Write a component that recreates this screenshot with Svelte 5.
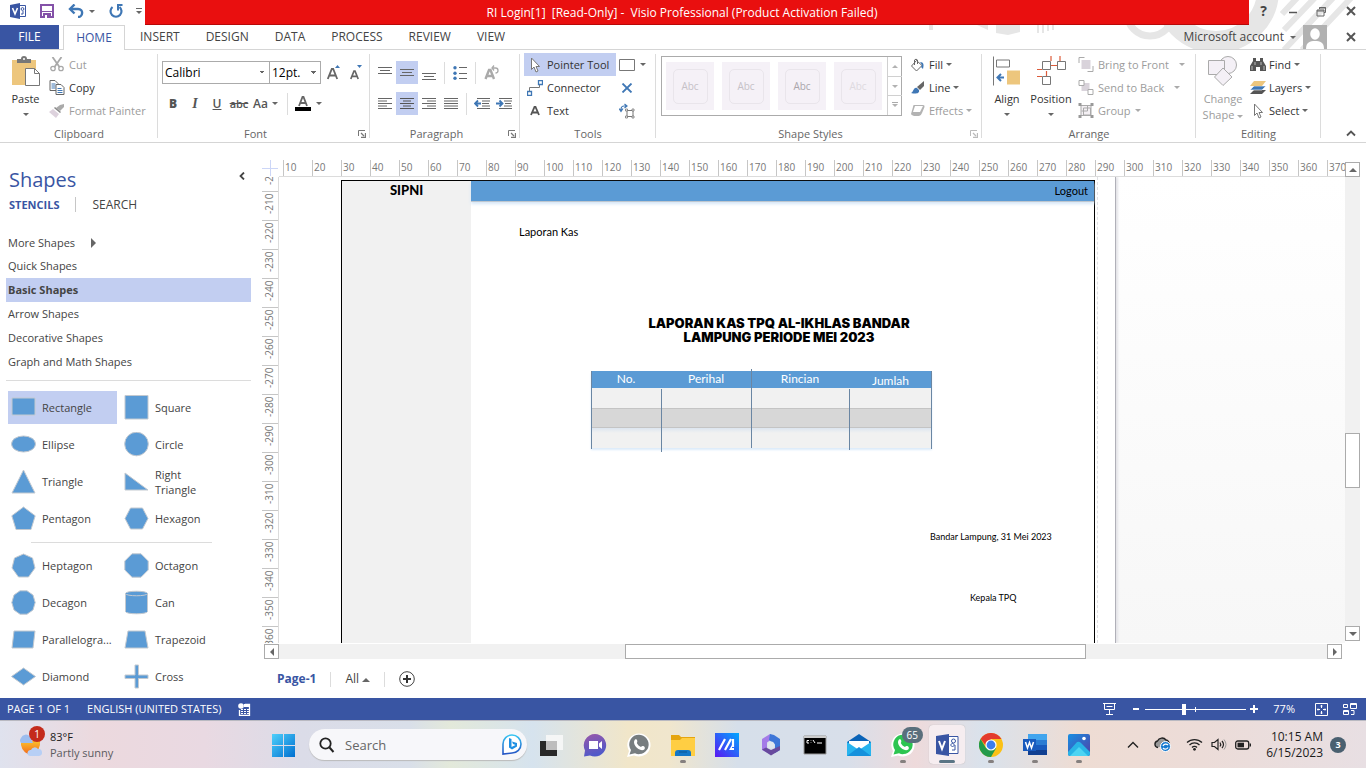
<script>
  // name: [width, height, svg content]
  const icons = {
    visio: [16, 16, '<path d="M0 2 10 0v16L0 14z" fill="#3955a3"/><path d="M2.500 5 5 11 7.500 5" fill="none" stroke="#fff" stroke-width="1.600"/><path d="M10 2.500h5.500v11H10" fill="#fff" stroke="#3955a3"/><circle cx="12.500" cy="6" r="1.400" fill="none" stroke="#3955a3"/><path d="M11 11h2V8" fill="none" stroke="#3955a3"/>'],
    save: [14, 14, '<path d="M1 1h12v12H1z" fill="#fff" stroke="#8452a8" stroke-width="2"/><path d="M1 7h12v1H1zM3 9h8v5H3z" fill="#8452a8"/><path d="M5 11h2v3H5z" fill="#fff"/>'],
    undo: [16, 14, '<path d="M2 5h8c6 0 5 8 0 8" fill="none" stroke="#3f77b5" stroke-width="2.400"/><path d="M6.500.5 2 5l4.500 4.500" fill="none" stroke="#3f77b5" stroke-width="2.400"/>'],
    redo: [15, 15, '<path d="M3.500 3A5.500 5.500 0 1 0 10.500 3" fill="none" stroke="#3f77b5" stroke-width="2.200"/><path d="M8 1h5.500M9 1v5.500" fill="none" stroke="#3f77b5" stroke-width="2"/>'],
    custom: [6, 7, '<path d="M0 .5h6" stroke="#666"/><path d="M0 3h6L3 6z" fill="#666"/>'],
    min: [10, 10, '<path d="M1 6.500h8" stroke="#555" stroke-width="1.500"/>'],
    restore: [11, 11, '<path d="M3.500 3V1.500h6v5H8M1 4h7v6H1zM1 5h7M3 2h7" fill="none" stroke="#666"/>'],
    close: [10, 10, '<path d="M1 1l8 8M9 1 1 9" stroke="#555" stroke-width="2"/>'],
    avatar: [24, 24, '<path d="M0 0h24v24H0z" fill="#b1b1b1"/><ellipse cx="12" cy="9" rx="4.800" ry="5.800" fill="#fff"/><path d="M3 24c0-7 4-8 9-8s9 1 9 8z" fill="#fff"/>'],
    paste: [30, 30, '<path d="M1 4h24v25H1z" fill="#edc67d"/><path d="M6 3h4a3 3 0 0 1 6 0h4v4H6z" fill="#777"/><circle cx="13" cy="3" r="1" fill="#fff"/><path d="M14.500 12.500h9l5 5v12h-14z" fill="#fff" stroke="#777"/><path d="M23.500 12.500v5h5" fill="none" stroke="#777"/>'],
    cut: [14, 15, '<path d="M2.500 0 9.500 10M11.500 0 4.500 10" stroke="#a8a8a8" stroke-width="1.800"/><circle cx="3" cy="11.500" r="2.200" fill="none" stroke="#a8a8a8" stroke-width="1.300"/><circle cx="11" cy="11.500" r="2.200" fill="none" stroke="#a8a8a8" stroke-width="1.300"/>'],
    copy: [15, 15, '<path d="M.5.500h5l3 3v7h-8z" fill="#fff" stroke="#666"/><path d="M2 4h4M2 6h4M2 8h4" stroke="#3f77b5"/><path d="M6.500 4.500h5l3 3v7h-8z" fill="#fff" stroke="#666"/><path d="M8 8.500h4M8 10.500h5M8 12.500h5" stroke="#3f77b5"/>'],
    painter: [16, 14, '<path d="m11 1 4-1v3l-4 4-4-3z" fill="#aaa"/><path d="m6 3 6 5-1 1-6-5z" fill="#888"/><path d="m4 5 6 5-3 4-7-6z" fill="#ddd2dd"/>'],
    growA: [14, 15, '<path d="M.8 14 4.800 4h1.400l4 10M2.300 10.500h6.500" fill="none" stroke="#666" stroke-width="1.800"/><path d="M8 3l2.500-3L13 3z" fill="#3f77b5"/>'],
    shrinkA: [14, 15, '<path d="M1.800 14 5 6h1l3.200 8M3 11.300h5" fill="none" stroke="#666" stroke-width="1.700"/><path d="M8 0h5l-2.500 3z" fill="#3f77b5"/>'],
    fontColor: [16, 15, '<path d="M4 10 7.500 1h1L12 10M5 7h6" fill="none" stroke="#666" stroke-width="1.800"/><path d="M0 11h16v4H0z" fill="#000"/>'],
    alTop: [14, 14, '<path d="M0 1.500h14M2 4.500h10M0 7.500h14" stroke="#666"/>'],
    alMid: [14, 14, '<path d="M0 3.500h14M2 6.500h10M0 9.500h14" stroke="#666"/>'],
    alBot: [14, 14, '<path d="M0 7.500h14M2 10.500h10M0 13.500h14" stroke="#666"/>'],
    bullets: [14, 14, '<circle cx="2" cy="1.800" r="1.700" fill="#3f77b5"/><circle cx="2" cy="7.300" r="1.700" fill="#3f77b5"/><circle cx="2" cy="12.300" r="1.700" fill="#3f77b5"/><path d="M6 1.500h8M6 7.500h8M6 12.500h8" stroke="#666"/>'],
    rotText: [15, 15, '<path d="M1.500 14 5 5h1.500L10 14M3 11h6" fill="none" stroke="#aaa" stroke-width="2.400"/><path d="M8 3h3.500a2.500 2.500 0 0 1 0 5M10 .5 8 3l2 2.500" fill="none" stroke="#aaa" stroke-width="1.300"/>'],
    left: [14, 11, '<path d="M0 .5h14M0 3h9M0 5.500h14M0 8h9M0 10.500h14" stroke="#666"/>'],
    center: [14, 11, '<path d="M0 .5h14M3 3h8M0 5.500h14M3 8h8M0 10.500h14" stroke="#555"/>'],
    right: [14, 11, '<path d="M0 .5h14M5 3h9M0 5.500h14M5 8h9M0 10.500h14" stroke="#666"/>'],
    justify: [14, 11, '<path d="M0 .5h14M0 3h14M0 5.500h14M0 8h14M0 10.500h14" stroke="#666"/>'],
    outdent: [16, 11, '<path d="M3 .5h13M8 3h8M8 5.500h7M8 8h8M3 10.500h13" stroke="#666"/><path d="M7 5.500H1.500M4 2.500l-3 3 3 3" fill="none" stroke="#3f77b5" stroke-width="1.800"/>'],
    indent: [16, 11, '<path d="M3 .5h13M8 3h8M9 5.500h6M8 8h8M3 10.500h13" stroke="#666"/><path d="M0 5.500h6M3.500 2.500l3 3-3 3" fill="none" stroke="#3f77b5" stroke-width="1.800"/>'],
    pointer: [16, 16, '<path d="M4.500 1v11.500l2.500-2.500 2 5 2-1-2-4.500h3.500z" fill="#fff" stroke="#777"/>'],
    connector: [16, 16, '<path d="M2.500 11V7.500h10V5" fill="none" stroke="#777"/><path d="M.5 11.500h4v4h-4zM11.500.500h4v4h-4z" fill="#fff" stroke="#3f77b5" stroke-width="1.300"/>'],
    textA: [16, 16, '<path d="M4 12 7.500 4h1L12 12M5.500 9.500h5" fill="none" stroke="#555" stroke-width="1.800"/>'],
    rect: [16, 12, '<path d="M.5.500h15v11H.5z" fill="#fff" stroke="#777"/>'],
    delx: [12, 10, '<path d="M1.500.500l9 9M10.500.500l-9 9" stroke="#3f77b5" stroke-width="1.800"/>'],
    cpoint: [17, 16, '<path d="M2 7.500V6a3 3 0 0 1 3-3h2M0 5.500l2 3 2-3M5.500 1l2.500 2-2.500 2" fill="none" stroke="#3f77b5" stroke-width="1.200"/><path d="M8 7.500h6v6H8z" fill="none" stroke="#777"/><path d="M6.500 6h2v2h-2zM13 6h2v2h-2zM6.500 13h2v2h-2zM13 13h2v2h-2z" fill="#fff" stroke="#777" stroke-width=".8"/>'],
    fill: [16, 14, '<path d="M6.500 2.500 12 7.500 6.500 13 1.500 8z" fill="#fff" stroke="#666"/><path d="M4.500 7V2a2 2 0 0 1 3 0v4" fill="none" stroke="#666"/><path d="M10 4c4 0 4 3 3 7l-2-2 1-2z" fill="#3f77b5"/>'],
    line: [14, 14, '<path d="m6 6 7-6v5L9 9z" fill="#666"/><path d="M0 12c3-1 2-6 6-5l2 2c1 4-4 4-8 3z" fill="#3f77b5"/>'],
    effects: [16, 13, '<path d="M4 1h9q2 0 1.500 2L12 9q-1 3-3 3H4q-3-1-3-2L3 3q0-2 1-2z" fill="#b3b3b3"/><path d="M5 2h8l-3 6H3z" fill="#fff"/>'],
    align: [28, 29, '<path d="M.5 0v29" stroke="#777"/><path d="M3.500 3.500h13v7h-13z" fill="#fff" stroke="#777"/><path d="M14 14h13v14H14z" fill="#edc67d"/><path d="M11 21H4.500M8 17.500 4.500 21 8 24.500" fill="none" stroke="#3f77b5" stroke-width="2"/>'],
    position: [29, 30, '<path d="M14 0v5M23 0v5M0 13.500h5M0 20.500h5M9.500 15v5M14 9.500h6" stroke="#dc5b3a" stroke-width="1.200"/><path d="M5.500 5.500h8v8h-8zM20.500 5.500h8v8h-8zM5.500 20.500h8v8h-8z" fill="#fff" stroke="#777"/>'],
    front: [15, 15, '<path d="M.5 6V.5H6M14.500 9v5.500H9" fill="none" stroke="#aaa"/><path d="M3 3h9v9H3z" fill="#d9d3db"/>'],
    back: [15, 15, '<path d="M3 3h8v8H3z" fill="#d9d3db"/><path d="M.5.500h5v5h-5zM9.500 9.500h5v5h-5z" fill="#fff" stroke="#aaa"/>'],
    group: [15, 15, '<path d="M2.500 2.500h10v10h-10zM5 5h7v7H5z" fill="#f4f0f4" stroke="#aaa"/><path d="M3 8h6V3" fill="none" stroke="#aaa"/><path d="M0 0h3v3H0zM12 0h3v3h-3zM0 12h3v3H0zM12 12h3v3h-3z" fill="#999"/>'],
    change: [30, 30, '<circle cx="20" cy="9" r="8.500" fill="#f4f0f6" stroke="#aaa"/><path d="M.5 4.500h16v14H.5z" fill="#f4f0f6" stroke="#aaa"/><path d="m15 12 9 9-9 8.500L6.500 21z" fill="#f4f0f6" stroke="#aaa"/>'],
    find: [16, 13, '<path d="M3 0h3v3h4V0h3v3l3 5v5h-6V9H6v4H0V8l3-5z" fill="#555"/><path d="M2 8v4M5 4v3M14 8v4M11 4v3" stroke="#bbb"/>'],
    layers: [16, 13, '<path d="M4 9h12l-4 4H0z" fill="#555"/><path d="M4 5h12l-4 4H0z" fill="#3f77b5" stroke="#fff" stroke-width=".6"/><path d="M4 0h12l-4 5H0z" fill="#edc67d"/>'],
    launcher: [8, 8, '<path d="M.5 6V.5H7" fill="none" stroke="#777"/><path d="m3 3 3 3M7.500 3v4.500H3" fill="none" stroke="#777" stroke-width="1.300"/>'],
    chevUp: [10, 7, '<path d="m1 5.500 4-4 4 4" fill="none" stroke="#555" stroke-width="1.800"/>'],
    chevLeft: [6, 8, '<path d="M5 .5 1.500 4 5 7.500" fill="none" stroke="#444" stroke-width="1.800"/>'],
    macro: [13, 13, '<path d="M1.500 7v5.500h10V1.500H7" fill="none" stroke="#fff" stroke-width="1.300"/><path d="M6 1h6v3H6z" fill="#fff"/><circle cx="3" cy="3" r="2.800" fill="#fff"/><path d="M3 6.500h8M3 8.500h8M3 10.500h8" stroke="#fff" stroke-dasharray="2 1"/>'],
    present: [13, 12, '<path d="M0 .5h13M1.500 1v5.500h10V1M3.500 3.500h6M6.500 7v4M3 11.500h7" fill="none" stroke="#fff"/>'],
    fit: [13, 13, '<path d="M.5.500h12v12H.5z" fill="none" stroke="#fff"/><path d="M6.500 2v3M6.500 8v3M2 6.500h3M8 6.500h3M5.500 3h2M5.500 10h2M3 5.500v2M10 5.500v2" stroke="#fff"/>'],
    switch: [14, 12, '<path d="M.5 1.500h4v3h-4zM7.500.500h6v5h-6zM.5 7.500h5v4h-5zM8 7.500h3v4H8M7 1.500h7M0 8.500h6" fill="none" stroke="#fff"/>'],
    addPage: [16, 16, '<circle cx="8" cy="8" r="7.300" fill="#fff" stroke="#444"/><path d="M8 4v8M4 8h8" stroke="#333" stroke-width="2"/>'],
    weather: [28, 30, '<path d="M3 12h19a9.500 11 0 0 1-19 4z" fill="url(#sun)"/><path d="M3 14a4 4 0 0 1 0-5 5 5 0 0 1 9-1l3 6z" fill="#9dbdee"/><path d="M12 27a3 3 0 0 1 1-6 4 4 0 0 1 7-1 3.500 3.500 0 0 1 1 7z" fill="#b7cff5"/><defs><linearGradient id="sun" x2="0" y2="1"><stop stop-color="#fbc02d"/><stop offset="1" stop-color="#f26a1b"/></linearGradient></defs>'],
    win: [24, 24, '<defs><linearGradient id="w" x2="1" y2="1"><stop stop-color="#4fd0fb"/><stop offset="1" stop-color="#006fd0"/></linearGradient></defs><path d="M1 1h11v11H1zM13 1h11v11H13zM1 13h11v11H1zM13 13h11v11H13z" fill="url(#w)"/>'],
    search: [16, 16, '<circle cx="6.500" cy="6.500" r="5.200" fill="none" stroke="#222" stroke-width="1.800"/><path d="m10.500 10.500 4 4.500" stroke="#222" stroke-width="2"/>'],
    bing: [20, 21, '<defs><linearGradient id="bg" x2="0" y2="1"><stop stop-color="#38c6f2"/><stop offset="1" stop-color="#2454c5"/></linearGradient></defs><path d="M1 20V10a9 9 0 1 1 9 9z" fill="#fff" stroke="url(#bg)" stroke-width="1.600"/><path d="M7 4l2.500 1v8l4-2-2.500-1-1-2.500 5 1.500v3.500l-5 3-3-2z" fill="#1d8fe3"/>'],
    taskview: [24, 24, '<path d="M1 8h17v15H1z" fill="#282828"/><path d="M7 2h17v15H7z" fill="#f7f7f7" opacity=".9"/><path d="M7 8h11v9H7z" fill="#bdbdbd"/>'],
    chat: [24, 24, '<defs><linearGradient id="ch" x2=".3" y2="1"><stop stop-color="#9a58a9"/><stop offset="1" stop-color="#5059c9"/></linearGradient></defs><path d="M12 1a11.300 11.300 0 1 1-5 21.500L1 23.500l1-6A11.300 11.300 0 0 1 12 1z" fill="url(#ch)"/><path d="M6 8h9v8H6zM16 10.500l3-2.500v8l-3-2.500z" fill="#fff"/>'],
    waGray: [24, 24, '<path d="M0 24 2 18A11.600 11.600 0 1 1 7 22.500z" fill="#fff"/><path d="M2.500 21.500 4 17A9.700 9.700 0 1 1 8 20.300z" fill="#777d80"/><path d="M8 6.500c2-1.500 3 2 1.800 3.500 1 2 2.200 3.200 4.200 4 1.500-2.200 5-.2 3.500 2.300C13 20 4 11 8 6.500z" fill="#fff"/>'],
    folder: [24, 24, '<path d="M0 2h8l2 2h14v18H0z" fill="#e5a50f"/><path d="M0 7h9l2-2h13v18H0z" fill="#ffce43"/><path d="M4 23v-3q0-3 3-3h10q3 0 3 3v3z" fill="#1477c8"/><path d="M8 19h8" stroke="#0b5794"/>'],
    asus: [24, 24, '<defs><linearGradient id="as" y1="1" x2="1" y2="0"><stop stop-color="#5a16f2"/><stop offset="1" stop-color="#00a9ff"/></linearGradient></defs><path d="M0 0h24v24H0z" fill="url(#as)"/><path d="m4 17 6-11M10 17l6-11M18 6v8" stroke="#fff" stroke-width="2.200"/><path d="m14 17 3-5v5zM17 15h2v2h-2z" fill="#fff"/>'],
    m365: [24, 24, '<path d="m11 1-8 5v11l5 2.500V9.500l7-5z" fill="#a47be8"/><path d="m11 1 4 1 6 4v11l-5 3v-8.500L10 7z" fill="#3e76d8"/><path d="m3 16.500 9 6 9-5.500v-4l-9 4-5-2.500z" fill="#684a9e"/><circle cx="12" cy="12" r="3.500" fill="#dfe6ef"/>'],
    cmd: [24, 24, '<path d="M1 3h22v18H1z" fill="#000" stroke="#999"/><path d="M1 3h22v2H1z" fill="#ccc"/><path d="M6 7.500H4V10h2M8 7.500v.5M8 9.500v.5M10 7l2 3M14 10h5" stroke="#fff" fill="none"/>'],
    mail: [24, 24, '<path d="m0 9 12-8 12 8v14H0z" fill="#0a63b7"/><path d="M2 8h20v10H2z" fill="#fff"/><path d="m0 9 12 8 12-8v14H0z" fill="#27b4ee"/><path d="m0 23 12-9 12 9z" fill="#1591dc"/>'],
    waGreen: [24, 24, '<path d="M0 24 2 18A11.600 11.600 0 1 1 7 22.500z" fill="#fff"/><path d="M2.500 21.500 4 17A9.700 9.700 0 1 1 8 20.300z" fill="#2dc551"/><path d="M8 6.500c2-1.500 3 2 1.800 3.500 1 2 2.200 3.200 4.200 4 1.500-2.200 5-.2 3.500 2.300C13 20 4 11 8 6.500z" fill="#fff"/>'],
    visioBig: [24, 24, '<path d="M13 3.500h10v17H13" fill="#fff" stroke="#3955a3"/><path d="M1 3 14 1v22L1 21z" fill="#3955a3"/><path d="m4 8 3 8 3-8" fill="none" stroke="#fff" stroke-width="2"/><circle cx="18.500" cy="8" r="2" fill="none" stroke="#3955a3"/><path d="M15.500 12l2-2 2 2-2 2zM17 17h3v-5" fill="none" stroke="#3955a3"/>'],
    chrome: [24, 24, '<circle cx="12" cy="12" r="12" fill="#fbc116"/><path d="M1.600 6A12 12 0 0 1 22.400 6H12L8 14z" fill="#e33b2e"/><path d="M1.600 6A12 12 0 0 0 12 24l5.200-9H7z" fill="#229a4b"/><circle cx="12" cy="12" r="5.600" fill="#fff"/><circle cx="12" cy="12" r="4.400" fill="#3b7ded"/>'],
    word: [24, 24, '<path d="M5 1h19v6H5z" fill="#41a5ee"/><path d="M5 7h19v5H5z" fill="#2b7cd3"/><path d="M5 12h19v5H5z" fill="#185abd"/><path d="M5 17h19v5H5z" fill="#103f91"/><path d="M0 6h13v12H0z" fill="#185abd"/><path d="m2.500 9 2 6 2-5.500 2 5.500 2-6" fill="none" stroke="#fff" stroke-width="1.500"/>'],
    photos: [24, 24, '<defs><linearGradient id="ph" x2="1" y2="1"><stop stop-color="#178fe3"/><stop offset="1" stop-color="#5140a6"/></linearGradient></defs><rect x="1" y="1" width="22" height="22" rx="2" fill="url(#ph)"/><path d="m1 19 9-10q2-1 4 1l9 9v2q0 2-2 2H3q-2 0-2-2z" fill="#29b4e6"/><path d="m3 23 9-9 9 9z" fill="#4ed4f2"/><circle cx="17" cy="5.500" r="1.800" fill="#fff"/>'],
    tray: [12, 8, '<path d="m1 6.500 5-5 5 5" fill="none" stroke="#222" stroke-width="1.400"/>'],
    cloud: [17, 15, '<path d="M4 10.500a3.300 3.300 0 0 1-.5-6.500A5 5 0 0 1 12 3a3.500 3.500 0 0 1 3 4" fill="#999" stroke="#222" stroke-width="1.400"/><circle cx="11.500" cy="9.500" r="5" fill="#1579cf" stroke="#fff"/><path d="M9 9a3 3 0 0 1 5-1M14 10.500a3 3 0 0 1-5 .5" fill="none" stroke="#fff" stroke-width="1.300"/>'],
    wifi: [17, 13, '<path d="M1 4.500a11 11 0 0 1 15 0M3.500 7a7 7 0 0 1 10 0M6 9.500a3.500 3.500 0 0 1 5 0" fill="none" stroke="#222" stroke-width="1.300"/><circle cx="8.500" cy="11.300" r="1.400" fill="#222"/>'],
    sound: [16, 13, '<path d="M1 4.500h2.500L7 1.500v10L3.500 8.500H1zM9 4.500q1.500 2 0 4M11 3q3 3.500 0 7" fill="none" stroke="#222" stroke-width="1.200"/><path d="M13 1.500q4 5 0 10" fill="none" stroke="#999"/>'],
    battery: [16, 10, '<rect x=".7" y="1" width="13" height="8" rx="2" fill="none" stroke="#222" stroke-width="1.300"/><path d="M2.500 2.700H9v4.600H2.500z" fill="#222"/><path d="M15.300 3.500v3" stroke="#222" stroke-width="1.400"/>'],
  };

  const shapePaths = {
    Rectangle: '<path d="M1 3h23v17H1z"/>',
    Square: '<path d="M1 0.500h23v23.500H1z"/>',
    Ellipse: '<ellipse cx="12.500" cy="12" rx="12" ry="8"/>',
    Circle: '<circle cx="12.500" cy="12" r="11.800"/>',
    Triangle: '<path d="m12.500 1 11.500 23H1z"/>',
    'Right Triangle': '<path d="M1 4v17h23z"/>',
    Pentagon: '<path d="m12.500 1 11.700 8.800L20 23.500H5L.8 9.800z"/>',
    Hexagon: '<path d="M6.500 2h12l5.500 10.500L18.500 23h-12L1 12.500z"/>',
    Heptagon: '<path d="m12.500 1 9 4 2.500 10-6.500 9h-10L1 15 3.500 5z"/>',
    Octagon: '<path d="M8 .8h9L24.200 8v9L17 24.200H8L.8 17V8z"/>',
    Decagon: '<path d="M9 .8h7l6 4.200 2.200 7.500L22 20l-6 4.200H9L3 20 .8 12.500 3 5z"/>',
    Can: '<path d="M1.500 3.500v18c0 3 22 3 22 0v-18c0-3-22-3-22 0z"/><path d="M1.500 3.500c0 3 22 3 22 0" fill="none"/>',
    'Parallelogra...': '<path d="M3 4h21l-2 17H1z"/>',
    Trapezoid: '<path d="M4 4h17l3 17H1z"/>',
    Diamond: '<path d="m12.500 4 12 8.500-12 8.500-12-8.500z"/>',
    Cross: '<path d="M11 1h3.500v10H24v3.500h-9.500V24H11v-9.500H1V11h10z"/>',
  };
  const names = Object.keys(shapePaths);
  const shapeSets = [names.slice(0, 8), names.slice(8)];

  const tabs = ['INSERT', 'DESIGN', 'DATA', 'PROCESS', 'REVIEW', 'VIEW'];
  const stencils = ['Quick Shapes', 'Basic Shapes', 'Arrow Shapes', 'Decorative Shapes', 'Graph and Math Shapes'];
  const hTicks = Array.from({ length: 37 }, (_, i) => (i + 1) * 10);
  const vTicks = Array.from({ length: 17 }, (_, i) => -200 - i * 10);
  const headings = ['No.', 'Perihal', 'Rincian', 'Jumlah'];
  const apps = [
    ['taskview', 'Task view'], ['chat', 'Chat'], ['waGray', 'WhatsApp Beta'], ['folder', 'File Explorer', 'open'],
    ['asus', 'MyASUS'], ['m365', 'Microsoft 365'], ['cmd', 'Command Prompt'], ['mail', 'Mail'],
    ['waGreen', 'WhatsApp', 'open', '65'], ['visioBig', 'Visio', 'active'], ['chrome', 'Chrome', 'open'],
    ['word', 'Word', 'open'], ['photos', 'Photos', 'open'],
  ];
  let stencil = $state('Basic Shapes');
  let shape = $state('Rectangle');
  let zoom = $state(38);
</script>

{#snippet ico(name)}
  <svg class="ico" width={icons[name][0]} height={icons[name][1]} viewBox="0 0 {icons[name][0]} {icons[name][1]}" aria-hidden="true">{@html icons[name][2]}</svg>
{/snippet}
{#snippet caret()}<i class="caret"></i>{/snippet}
{#snippet cmd(icon, label, drop = false)}
  <button class="cmd">{@render ico(icon)}<span>{label}</span>{#if drop}{@render caret()}{/if}</button>
{/snippet}
{#snippet tool(icon, label, on = false)}
  <button class="tool" class:on aria-label={label}>{@render ico(icon)}</button>
{/snippet}

<div class="window">
  <header>
    <svg class="art" width="420" height="49" viewBox="0 0 420 49" aria-hidden="true">
      <g fill="none" stroke="#e6e6e6">
        <circle cx="204" cy="13" r="23" stroke-width="7" />
        <circle cx="270" cy="-10" r="52" stroke-width="22" />
        <path d="M-15 0v30" stroke-width="4" /><path d="M20 20l22 10V20M50 0v33l12 2 12-3V0" fill="#e6e6e6" stroke="none" />
        <path d="M92 0v33M97 0v33M102 0v31M107 0v30" stroke-width="2" />
        <path d="m420-18-64 68M402-18l-64 68M384-18l-46 48M366-18l-30 32" stroke-width="6" />
      </g>
    </svg>
    <div class="titlebar">
      <div class="quick">
        {@render tool('visio', 'Visio')}
        {@render tool('save', 'Save')}
        <button class="tool wide" aria-label="Undo">{@render ico('undo')}{@render caret()}</button>
        {@render tool('redo', 'Repeat')}
        {@render tool('custom', 'Customize Quick Access Toolbar')}
      </div>
      <div class="title">RI Login[1]&nbsp; [Read-Only] -&nbsp; Visio Professional (Product Activation Failed)</div>
      <div class="winbtns">
        <button class="help">?</button>
        {@render tool('min', 'Minimize')}
        {@render tool('restore', 'Restore')}
        {@render tool('close', 'Close')}
      </div>
    </div>
    <nav class="tabs">
      <button class="file">FILE</button>
      <button class="home">HOME</button>
      {#each tabs as t}<button>{t}</button>{/each}
      <div class="account">
        <button class="acct">Microsoft account {@render caret()}</button>
        {@render ico('avatar')}
        {@render tool('close', 'Close document')}
      </div>
    </nav>
  </header>

  <div class="ribbon">
    <section>
      <div class="body clip">
        <button class="big">{@render ico('paste')}<span>Paste</span>{@render caret()}</button>
        <div class="stack">
          <div class="off">{@render cmd('cut', 'Cut')}</div>
          {@render cmd('copy', 'Copy')}
          <div class="off">{@render cmd('painter', 'Format Painter')}</div>
        </div>
      </div>
      <h2>Clipboard</h2>
    </section>
    <section>
      <div class="body rows">
        <div class="line">
          <select class="face" aria-label="Font"><option>Calibri</option></select>
          <select class="size" aria-label="Font size"><option>12pt.</option></select>
          {@render tool('growA', 'Increase font size')}
          {@render tool('shrinkA', 'Decrease font size')}
        </div>
        <div class="line fmt">
          <button class="tool"><b>B</b></button>
          <button class="tool"><em>I</em></button>
          <button class="tool"><u>U</u></button>
          <button class="tool"><s>abc</s></button>
          <button class="tool wide aa"><span>Aa</span>{@render caret()}</button>
          <i class="sep"></i>
          <button class="tool wide" aria-label="Font color">{@render ico('fontColor')}{@render caret()}</button>
        </div>
      </div>
      <h2 class="inset">Font</h2>
      <button class="launch" aria-label="Font settings">{@render ico('launcher')}</button>
    </section>
    <section>
      <div class="body rows para">
        <div class="line">
          {@render tool('alTop', 'Align top')}
          {@render tool('alMid', 'Align middle', true)}
          {@render tool('alBot', 'Align bottom')}
          <i class="sep"></i>
          {@render tool('bullets', 'Bullets')}
          <i class="sep"></i>
          {@render tool('rotText', 'Rotate text')}
        </div>
        <div class="line">
          {@render tool('left', 'Align left')}
          {@render tool('center', 'Center', true)}
          {@render tool('right', 'Align right')}
          {@render tool('justify', 'Justify')}
          <i class="sep"></i>
          {@render tool('outdent', 'Decrease indent')}
          {@render tool('indent', 'Increase indent')}
        </div>
      </div>
      <h2 class="inset">Paragraph</h2>
      <button class="launch" aria-label="Paragraph settings">{@render ico('launcher')}</button>
    </section>
    <section>
      <div class="body tools">
        <div class="stack">
          <div class="picked">{@render cmd('pointer', 'Pointer Tool')}</div>
          {@render cmd('connector', 'Connector')}
          {@render cmd('textA', 'Text')}
        </div>
        <div class="stack side">
          <button class="tool wide" aria-label="Rectangle tool">{@render ico('rect')}{@render caret()}</button>
          {@render tool('delx', 'Connection point')}
          {@render tool('cpoint', 'Text block')}
        </div>
      </div>
      <h2>Tools</h2>
    </section>
    <section>
      <div class="body styles">
        <div class="gallery">
          {#each [1, 2, 3, 4] as n}<button class="tile t{n}"><span>Abc</span></button>{/each}
          <div class="scroller">
            <button aria-label="Previous styles"><i class="caret up"></i></button>
            <button aria-label="Next styles">{@render caret()}</button>
            <button class="more" aria-label="More styles">{@render caret()}</button>
          </div>
        </div>
        <div class="stack tight">
          {@render cmd('fill', 'Fill', true)}
          {@render cmd('line', 'Line', true)}
          <div class="off">{@render cmd('effects', 'Effects', true)}</div>
        </div>
      </div>
      <h2 class="inset">Shape Styles</h2>
      <button class="launch dim" aria-label="Shape style settings">{@render ico('launcher')}</button>
    </section>
    <section>
      <div class="body arrange">
        <button class="big">{@render ico('align')}<span>Align</span>{@render caret()}</button>
        <button class="big">{@render ico('position')}<span>Position</span>{@render caret()}</button>
        <div class="stack off">
          <div class="split">{@render cmd('front', 'Bring to Front', true)}</div>
          <div class="split">{@render cmd('back', 'Send to Back', true)}</div>
          {@render cmd('group', 'Group', true)}
        </div>
      </div>
      <h2>Arrange</h2>
    </section>
    <section>
      <div class="body edit">
        <button class="big off">{@render ico('change')}<span>Change<br />Shape{@render caret()}</span></button>
        <div class="stack">
          {@render cmd('find', 'Find', true)}
          {@render cmd('layers', 'Layers', true)}
          {@render cmd('pointer', 'Select', true)}
        </div>
      </div>
      <h2>Editing</h2>
    </section>
    <button class="collapse" aria-label="Collapse ribbon">{@render ico('chevUp')}</button>
  </div>

  <div class="work">
    <aside>
      <div class="head">
        <h1>Shapes</h1>
        <button class="fold" aria-label="Minimize shapes window">{@render ico('chevLeft')}</button>
      </div>
      <div class="modes"><button class="cur">STENCILS</button><i></i><button>SEARCH</button></div>
      <div class="stencils">
        <button>More Shapes <i class="arrow"></i></button>
        {#each stencils as s}
          <button class:cur={s === stencil} onclick={() => (stencil = s)}>{s}</button>
        {/each}
      </div>
      {#each shapeSets as set, i}
        {#if i}<hr />{/if}
        <div class="shapes">
          {#each set as n}
            <button class:cur={n === shape} onclick={() => (shape = n)}>
              <svg width="25" height="25" viewBox="0 0 25 25" fill="#5b9bd5" stroke="#c3c9d0" aria-hidden="true">{@html shapePaths[n]}</svg>
              <span>{n}</span>
            </button>
          {/each}
        </div>
      {/each}
    </aside>

    <main>
      <div class="board">
        <div class="corner"></div>
        <div class="hruler">{#each hTicks as t}<span>{t}</span>{/each}</div>
        <div class="vruler">{#each vTicks as t}<span>{t}</span>{/each}</div>
        <div class="canvas">
          <div class="sheet"></div>
          <div class="margin"></div>
          <div class="frame">
            <div class="menu">SIPNI</div>
            <div class="bar">Logout</div>
          </div>
          <p class="crumb">Laporan Kas</p>
          <h3>LAPORAN KAS TPQ AL-IKHLAS BANDAR<br />LAMPUNG PERIODE MEI 2023</h3>
          <table>
            <colgroup><col class="c1" /><col class="c2" /><col class="c3" /><col class="c4" /></colgroup>
            <thead><tr>{#each headings as h}<th>{h}</th>{/each}</tr></thead>
            <tbody>
              {#each [1, 2, 3] as r}<tr class="r{r}">{#each headings as h}<td></td>{/each}</tr>{/each}
            </tbody>
          </table>
          <svg class="rules" width="345" height="85" viewBox="0 0 345 85" aria-hidden="true">
            <path d="M1.500 2v78M71.500 20v63M161.500 0v79M259.500 20v61M341.500 2v78" stroke="#6a86a3" />
          </svg>
          <p class="place">Bandar Lampung, 31 Mei 2023</p>
          <p class="signer">Kepala TPQ</p>
        </div>
        <div class="vbar">
          <button aria-label="Scroll up"><i class="caret up"></i></button>
          <div class="track"><div class="thumb"></div></div>
          <button aria-label="Scroll down">{@render caret()}</button>
        </div>
      </div>
      <div class="hbar">
        <button aria-label="Scroll left"><i class="arrow back"></i></button>
        <div class="track"><div class="thumb"></div></div>
        <button aria-label="Scroll right"><i class="arrow"></i></button>
      </div>
      <div class="pages">
        <button class="cur">Page-1</button><i class="sep"></i>
        <button>All <i class="caret up"></i></button><i class="sep"></i>
        <button aria-label="Insert page">{@render ico('addPage')}</button>
      </div>
    </main>
  </div>

  <footer class="status">
    <span>PAGE 1 OF 1</span>
    <span>ENGLISH (UNITED STATES)</span>
    {@render ico('macro')}
    <div class="zoom">
      <button aria-label="Presentation mode">{@render ico('present')}</button>
      <button class="sign" aria-label="Zoom out"><i class="minus"></i></button>
      <input type="range" aria-label="Zoom" min="0" max="100" bind:value={zoom} />
      <button class="sign" aria-label="Zoom in"><i class="plus"></i></button>
      <span class="pct">77%</span>
      <button aria-label="Fit page to window">{@render ico('fit')}</button>
      <button aria-label="Switch windows">{@render ico('switch')}</button>
    </div>
  </footer>

  <div class="taskbar">
    <button class="weather">
      <span class="sun">{@render ico('weather')}<b>1</b></span>
      <span class="lines"><span>83°F</span><small>Partly sunny</small></span>
    </button>
    <div class="dock">
      <button class="app" aria-label="Start">{@render ico('win')}</button>
      <label class="find">{@render ico('search')}<input type="text" placeholder="Search" aria-label="Search" />{@render ico('bing')}</label>
      {#each apps as [icon, label, st, count]}
        <button class="app {st ?? ''}" aria-label={label}>{@render ico(icon)}{#if count}<b>{count}</b>{/if}</button>
      {/each}
    </div>
    <div class="tray">
      {@render ico('tray')}
      {@render ico('cloud')}
      <span class="net">{@render ico('wifi')}{@render ico('sound')}{@render ico('battery')}</span>
      <span class="clock">10:15 AM<br />6/15/2023</span>
      <b>3</b>
    </div>
  </div>
</div>

<style>
  :global(body) { margin: 0; background: #fff; }
  .window { display: flex; flex-direction: column; min-height: 100vh; font: 12px/16px "Open Sans", "Noto Sans", sans-serif; color: #444; overflow: hidden; }
  button { border: 0; padding: 0; margin: 0; background: none; font: inherit; color: inherit; white-space: nowrap; }
  h1, h2, h3, p { margin: 0; font-weight: normal; }
  .ico { display: block; flex: none; }
  .caret { display: inline-block; flex: none; border: 3px solid transparent; border-top-color: #666; border-bottom: 0; }
  .caret.up { border-top: 0; border-bottom: 3px solid #666; }
  .arrow { display: inline-block; border: 5px solid transparent; border-left: 5px solid #666; border-right: 0; }
  .sep { width: 1px; height: 22px; background: #dcdcdc; }

  header { position: relative; border-bottom: 1px solid #d5d5d5; }
  .art { position: absolute; right: 0; top: 0; overflow: visible; clip-path: inset(0 0 0 -60px); }
  .titlebar { position: relative; display: flex; height: 25px; }
  .quick { display: flex; align-items: center; width: 145px; padding-left: 6px; padding-bottom: 3px; box-sizing: border-box; }
  .quick .tool { height: 22px; width: 24px; }
  .quick .tool:nth-child(2) { width: 34px; }
  .quick .tool.wide { width: 34px; gap: 5px; }
  .quick .tool:nth-child(4) { width: 36px; }
  .quick .tool:last-child { width: 10px; }
  .title { flex: 1; background: #e90f0f; border-bottom: 1px solid #b80808; color: #fff; text-align: center; line-height: 25px; height: 24px; padding-right: 30px; }
  .winbtns { display: flex; align-items: center; width: 117px; padding-bottom: 3px; box-sizing: border-box; }
  .winbtns button { flex: none; width: 29px; }
  .help { font-weight: bold; font-size: 14px; }
  .tool { display: flex; align-items: center; justify-content: center; width: 22px; height: 23px; flex: none; }
  .tool.on { background: #c2cef1; }
  .tool.wide { width: auto; gap: 5px; }
  .tabs { position: relative; display: flex; height: 24px; }
  .tabs > button { padding: 0 13px; }
  .tabs > .file { width: 59px; padding: 0; margin-right: 4px; background: #3955a3; color: #fff; }
  .tabs > .home { width: 62px; padding: 0; margin-right: 2px; box-sizing: border-box; border: 1px solid #d5d5d5; border-bottom: 0; background: #fff; color: #3955a3; height: 25px; }
  .account { margin-left: auto; display: flex; align-items: center; }
  .acct { display: flex; align-items: center; gap: 6px; margin-right: 7px; }
  .account .tool { width: 31px; margin-left: 8px; }

  .ribbon { display: grid; grid-template-columns: 158px 212px 150px 136px 326px 214px 125px 1fr; height: 92px; border-bottom: 1px solid #d5d5d5; font-size: 11px; }
  section { position: relative; display: flex; flex-direction: column; padding-top: 3px; }
  section::after { content: ""; position: absolute; right: 0; top: 4px; bottom: 4px; width: 1px; background: #dcdcdc; }
  .body { display: flex; height: 72px; }
  h2 { font-size: 11px; line-height: 17px; text-align: center; color: #666; }
  h2.inset { padding-right: 17px; }
  .launch { position: absolute; right: 4px; bottom: 4px; }
  .dim { opacity: .5; }
  .stack { display: flex; flex-direction: column; }
  .cmd { display: flex; align-items: center; gap: 4px; height: 23px; color: #333; }
  .cmd .ico { width: 16px; }
  .off, .off .cmd { color: #9c9c9c; }
  .off .caret { border-top-color: #aaa; }
  .big { display: flex; flex-direction: column; align-items: center; padding-top: 3px; height: 66px; min-width: 31px; color: #333; }
  .big .ico { height: 30px; margin-bottom: 5px; }
  .big > .caret { margin-top: 6px; }
  .big.off { color: #9c9c9c; }
  .big.off span { line-height: 16px; }
  .big.off .caret { margin-left: 3px; vertical-align: middle; }
  .clip { padding-left: 10px; gap: 8px; }
  .rows { flex-direction: column; padding: 8px 0 0 4px; gap: 8px; box-sizing: border-box; }
  .line { display: flex; align-items: center; height: 23px; }
  select { appearance: none; box-sizing: border-box; height: 23px; border: 1px solid #ababab; border-radius: 0; background: #fff; color: #000; font: inherit; font-size: 12px; padding: 0 2px; background-image: linear-gradient(45deg, transparent 50%, #666 50%), linear-gradient(-45deg, transparent 50%, #666 50%); background-size: 3px 3px; background-repeat: no-repeat; background-position: right 7px center, right 4px center; }
  select { background-image: linear-gradient(-135deg, #666 50%, transparent 50%), linear-gradient(135deg, #666 50%, transparent 50%); }
  .face { width: 108px; }
  .size { width: 52px; margin-left: -1px; margin-right: 2px; }
  .fmt .tool { font-weight: 600; font-size: 12px; color: #555; }
  .fmt em { font-family: "Liberation Serif", serif; font-weight: bold; font-size: 14px; }
  .fmt s { font-size: 11px; }
  .fmt .aa { gap: 4px; margin: 0 9px 0 3px; }
  .fmt .sep { margin-right: 7px; }
  .para .sep { margin: 0 4px; }
  .tools { padding-left: 4px; gap: 3px; }
  .picked { background: #c2cef1; width: 92px; }
  .tools .cmd { padding-left: 3px; }
  .side { align-items: flex-start; }
  .side .tool:not(.wide) { width: 16px; }
  .styles { padding-left: 5px; gap: 8px; }
  .gallery { display: flex; gap: 8px; padding-left: 4px; align-items: center; box-sizing: border-box; width: 241px; height: 60px; margin-top: 3px; border: 1px solid #ababab; }
  .tile { width: 48px; height: 48px; flex: none; background: #f5f1f7; display: grid; place-items: center; font-size: 10px; color: #c5c1c7; }
  .tile span { width: 33px; height: 33px; line-height: 33px; border: 1px solid #e9e5eb; border-radius: 5px; }
  .t3 { color: #aaa6ac; }
  .t4 { color: #dedae0; }
  .scroller { display: flex; flex-direction: column; height: 100%; width: 14px; border-left: 1px solid #d0d0d0; flex: none; margin-left: -3px; }
  .scroller button { flex: 1; display: grid; place-items: center; }
  .scroller button + button { border-top: 1px solid #d0d0d0; }
  .scroller .caret { opacity: .5; }
  .more { position: relative; }
  .more::before { content: ""; position: absolute; top: 6px; left: 4px; width: 6px; height: 1px; background: #aaa; }
  .tight .cmd { gap: 3px; }
  .arrange { padding-left: 8px; gap: 5px; }
  .arrange .big { width: 34px; }
  .arrange .big + .big { width: 44px; }
  .split .caret { margin-left: 6px; }
  .edit { padding-left: 6px; gap: 6px; }
  .edit .big { width: 42px; }
  .edit .cmd { gap: 3px; }
  .collapse { justify-self: end; align-self: end; padding: 0 10px 5px 0; }

  .work { display: flex; flex: 1; min-height: 0; }
  aside { width: 262px; flex: none; padding: 22px 0 0 8px; box-sizing: border-box; }
  .head { display: flex; justify-content: space-between; padding: 0 17px 0 1px; }
  h1 { font-size: 20px; line-height: 30px; color: #3955a3; }
  .fold { height: 22px; }
  .modes { display: flex; align-items: center; gap: 16px; height: 19px; padding-left: 1px; font-size: 12px; }
  .modes .cur { color: #3955a3; font-weight: bold; font-size: 11px; }
  .modes i { width: 1px; height: 15px; background: #c6c6c6; }
  .stencils { display: flex; flex-direction: column; margin: 17px 11px 0 -2px; border-bottom: 1px solid #dcdcdc; padding-bottom: 6px; }
  .stencils button { height: 24px; padding-left: 2px; text-align: left; font-size: 11px; }
  .stencils button:first-child { height: 23px; }
  .stencils .cur { background: #c2cef1; font-weight: bold; }
  .stencils .arrow { margin-left: 13px; vertical-align: -1px; }
  .shapes { display: grid; grid-template-columns: 109px 109px; gap: 4px; margin-top: 10px; font-size: 11px; }
  .shapes button { display: flex; align-items: center; gap: 6px; height: 33px; padding: 0 8px 0 3px; text-align: left; line-height: 15px; }
  .shapes svg { flex: none; }
  .shapes button span { white-space: normal; }
  .shapes .cur { background: #c2cef1; }
  hr { width: 181px; height: 1px; border: 0; background: #dcdcdc; margin: 7px 0 -4px 23px; }

  main { flex: 1; min-width: 0; display: flex; flex-direction: column; padding-top: 17px; }
  .board { flex: 1; min-height: 0; display: grid; grid-template: 17px minmax(0, 1fr) / 17px minmax(0, 1fr) 15px; padding-right: 6px; }
  .corner { background: linear-gradient(#ccd6f7, #ccd6f7) 8px 0 / 1px 16px no-repeat, linear-gradient(#ccd6f7, #ccd6f7) 0 8px / 16px 1px no-repeat; }
  .hruler { display: flex; overflow: hidden; padding-left: 4px; border-bottom: 1px solid #dcdcdc; font-size: 10px; line-height: 14px; color: #777; }
  .hruler span { flex: none; box-sizing: border-box; width: 29px; border-left: 1px solid #c6c6c6; padding-left: 1px; }
  .vruler { contain: size; overflow: hidden; border-right: 1px solid #dcdcdc; font-size: 10px; line-height: 14px; color: #777; grid-area: 2 / 1; }
  .vruler span { display: block; box-sizing: border-box; height: 29px; border-bottom: 1px solid #c6c6c6; writing-mode: vertical-rl; transform: rotate(180deg); text-align: right; width: 16px; padding-bottom: 2px; }
  .vruler span { border-bottom: 0; border-top: 1px solid #c6c6c6; }
  .vruler span:first-child { margin-top: -14px; }
  .canvas { position: relative; overflow: hidden; grid-area: 2 / 2; background: linear-gradient(#fff, #f7f7f7); color: #000; font-family: Lato, sans-serif; }
  .canvas > * { position: absolute; }
  .sheet { inset: 0 auto 0 0; width: 836px; background: #fff; border-right: 1px solid #b0b0b8; box-shadow: 2px 0 2px #e4e4e8; }
  .margin { left: 818px; top: 0; bottom: 0; border-left: 1px dashed #e0e0e4; }
  .frame { left: 62px; top: 3px; bottom: -4px; width: 754px; box-sizing: border-box; border: 1px solid #000; display: flex; align-items: flex-start; }
  .menu { width: 129px; flex: none; height: 100%; background: #f1f1f1; text-align: center; font-weight: 900; font-size: 13px; line-height: 18px; }
  .bar { flex: 1; background: #5b9bd5; border-bottom: 1px solid #bfc7cf; box-shadow: 0 2px 3px #d5e6f7; height: 20px; line-height: 20px; text-align: right; padding-right: 6px; font-size: 11px; }
  .crumb { left: 240px; top: 47px; font-size: 11px; }
  h3 { left: 350px; width: 300px; top: 139px; text-align: center; font: 900 13px/14px Inter, sans-serif; white-space: nowrap; }
  table { left: 312px; top: 194px; border-collapse: collapse; table-layout: fixed; width: 341px; box-shadow: 0 2px 2px #dcebfa; }
  .c1 { width: 70px; } .c2 { width: 90px; } .c3 { width: 98px; } .c4 { width: 83px; }
  th { background: #5b9bd5; color: #fff; height: 17px; line-height: 15px; padding: 0; font-weight: normal; font-size: 12px; vertical-align: top; }
  th:last-child { vertical-align: bottom; }
  td { height: 20px; padding: 0; background: #f1f1f1; }
  .r2 td { background: #d7d7d7; box-shadow: inset 0 1px #c4c4c4, inset 0 -1px #c4c4c4; }
  .r3 td { background: linear-gradient(#dde6f0, #f1f1f1 5px); }
  .rules { left: 311px; top: 192px; }
  .place { left: 651px; top: 352px; font-size: 9px; }
  .signer { left: 691px; top: 413px; font-size: 9px; }
  .vbar { grid-area: 1 / 3 / 3 / 4; display: flex; flex-direction: column; padding: 2px 0; }
  .vbar button, .hbar button { box-sizing: border-box; width: 15px; height: 15px; border: 1px solid #ababab; background: #fff; display: grid; place-items: center; flex: none; }
  .vbar .caret, .pages .caret { border-width: 4px; }
  .vbar .caret:not(.up) { border-bottom: 0; }
  .vbar .up, .pages .up { border-top: 0; }
  .track { flex: 1; background: #f1f1f1; display: flex; }
  .vbar .track { flex-direction: column; }
  .thumb { box-sizing: border-box; background: #fff; border: 1px solid #ababab; }
  .vbar .thumb { margin-top: 256px; height: 55px; }
  .hbar { display: flex; padding: 1px 24px 1px 2px; }
  .hbar .thumb { margin-left: 33%; width: 44%; }
  .hbar .arrow { border-width: 4px; border-right: 0; }
  .hbar .back { border: 4px solid transparent; border-right-color: #666; border-left: 0; }
  .pages { display: flex; align-items: center; height: 38px; gap: 14px; padding-left: 15px; box-sizing: border-box; }
  .pages .sep { height: 15px; }
  .pages .cur { color: #3955a3; font-weight: bold; }
  .pages .caret { vertical-align: 1px; }

  .status { display: flex; align-items: center; gap: 17px; height: 22px; background: #3955a3; color: #fff; padding: 0 9px 0 7px; font-size: 11px; }
  .zoom { margin-left: auto; display: flex; align-items: center; }
  .zoom button:first-child { margin-right: 17px; }
  .sign { width: 9px; height: 9px; position: relative; display: flex; align-items: center; }
  .sign i { display: block; height: 2px; width: 8px; background: #fff; }
  .sign .minus { width: 6px; }
  .plus::after { content: ""; position: absolute; left: 3px; top: 0; width: 2px; height: 8px; background: #fff; }
  input[type="range"] { appearance: none; width: 101px; height: 14px; margin: 0 4px 0 3px; background: linear-gradient(#fff, #fff) 50% 50% / 1px 5px no-repeat, linear-gradient(#fff, #fff) 0 50% / 100% 1px no-repeat; }
  input[type="range"]::-webkit-slider-thumb { appearance: none; width: 4px; height: 11px; background: #fff; }
  .pct { margin: 0 20px 0 14px; }
  .zoom button:nth-of-type(4) { margin-right: 15px; }

  .taskbar { position: relative; display: grid; grid-template-columns: 1fr auto 1fr; align-items: center; height: 48px; color: #1b1b1b; background: linear-gradient(90deg, #dfe2ee 0, #ecd9de 7%, #e9d9e2 15%, #dbdce8 22%, #d9dfe9 30%, #e3e9da 33%, #d6e3ee 39%, #f1e6c9 46%, #f0e6cd 49%, #d6dfea 54%, #d8dfea 62%, #eedadb 67%, #d9e2ec 72%, #eedcd3 79%, #ecdcd8 88%, #e8dfe3 100%); border-top: 1px solid #b9b9c1; box-sizing: border-box; }
  .weather { display: flex; gap: 4px; padding-left: 18px; text-align: left; justify-self: start; font-size: 11px; }
  .sun { position: relative; }
  .sun b { position: absolute; left: 11px; top: -3px; width: 16px; line-height: 16px; border-radius: 8px; background: #c42b1c; color: #fff; text-align: center; font-size: 10px; font-weight: normal; }
  .lines { display: flex; flex-direction: column; }
  .lines small { font-size: 11px; color: #5b5b60; }
  .dock { display: flex; align-items: center; padding-right: 4px; }
  .app { position: relative; width: 44px; height: 47px; display: grid; place-items: center; }
  .app b { position: absolute; right: 2px; top: 6px; background: #5a6f7c; color: #fff; font-size: 10px; font-weight: normal; line-height: 16px; padding: 0 5px; border-radius: 8px; }
  .app.open::after, .app.active::after { content: ""; position: absolute; bottom: 5px; left: 19px; width: 6px; height: 3px; border-radius: 2px; background: #85807f; }
  .app.active::before { content: ""; position: absolute; inset: 4px 4px; background: #f6edf0; border-radius: 4px; box-shadow: 0 0 1px #aaa; }
  .app.active .ico { position: relative; }
  .app.active::after { left: 14px; width: 16px; background: #5a7585; }
  .find { display: flex; align-items: center; gap: 10px; box-sizing: border-box; width: 218px; height: 31px; margin: 0 2px 0 4px; padding: 0 5px 0 10px; border-radius: 16px; background: #f7f7fa; box-shadow: 0 1px 1px #bbb; }
  .find input { flex: 1; min-width: 0; border: 0; padding: 0; background: none; font: inherit; font-size: 13px; color: #555; }
  .find input::placeholder { color: #666; opacity: 1; }
  .tray { display: flex; align-items: center; justify-content: flex-end; gap: 15px; padding-right: 20px; }
  .net { display: flex; align-items: center; gap: 8px; }
  .clock { text-align: right; font-size: 12px; }
  .tray b { width: 16px; line-height: 16px; border-radius: 8px; background: #4a6070; color: #fff; font-size: 9px; text-align: center; margin-left: -8px; }
</style>
